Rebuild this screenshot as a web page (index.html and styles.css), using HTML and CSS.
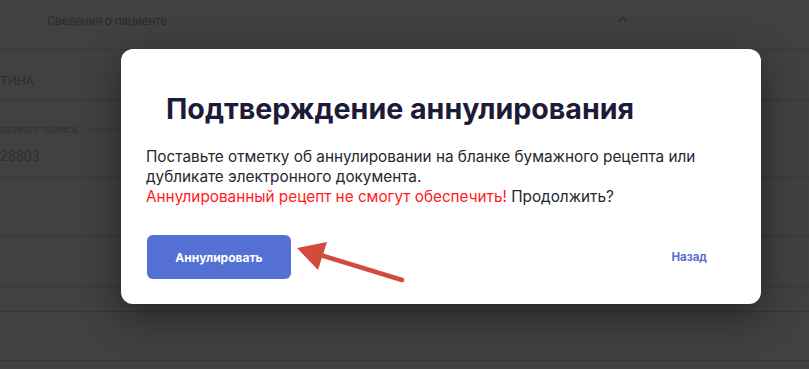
FILE: index.html
```html
<!DOCTYPE html>
<html lang="ru">
<head>
  <meta charset="UTF-8">
  <meta name="viewport" content="width=device-width, initial-scale=1.0">
  <title>Подтверждение аннулирования</title>
  <link rel="stylesheet" href="styles.css">
</head>
<body>
  <div class="page">
    <div class="section-head">
      <span class="section-title">Сведения о пациенте</span>
      <svg class="chevron" width="10" height="6" viewBox="0 0 10 6"><path d="M1 5.5 L5 1.5 L9 5.5" fill="none" stroke="#2a2a2a" stroke-width="1.3"/></svg>
    </div>
    <div class="row row-name"><span class="value">ТИНА</span></div>
    <div class="field">
      <div class="legend"><span>ахового полиса</span><i class="legend-line"></i></div>
      <span class="value">28803</span>
    </div>
    <div class="row row-tall"></div>
    <div class="row row-mid"></div>
    <div class="row row-small"></div>
    <div class="row row-tall2"></div>
  </div>

  <div class="modal">
    <h1 class="modal-title">Подтверждение аннулирования</h1>
    <p class="modal-text">
      Поставьте отметку об аннулировании на бланке бумажного рецепта или
      дубликате электронного документа.<br>
      <span class="warn">Аннулированный рецепт не смогут обеспечить!</span> Продолжить?
    </p>
    <div class="modal-actions">
      <button class="btn-primary">Аннулировать</button>
      <button class="btn-link">Назад</button>
    </div>
  </div>

  <svg class="arrow" width="120" height="50" viewBox="0 0 120 50">
    <line x1="108" y1="38" x2="20" y2="11" stroke="#d24b3c" stroke-width="4.5" stroke-linecap="round"/>
    <polygon points="3,6 33,0 24,28" fill="#d24b3c"/>
  </svg>
</body>
</html>
```

FILE: styles.css
```css
html, body {
  margin: 0;
  height: 100%;
}
body {
  background: #414141;
  font-family: Roboto, "Liberation Sans", sans-serif;
  overflow: hidden;
}
.page {
  color: #2b2b2b;
}
.section-head {
  height: 50px;
  border-bottom: 1px solid #373737;
  display: flex;
  align-items: flex-start;
  padding: 13px 0 0 47px;
  box-sizing: border-box;
  font-size: 12.5px;
  letter-spacing: -0.3px;
}
.chevron {
  margin: 3px 0 0 451px;
}
.row {
  border-bottom: 1px solid #373737;
  box-sizing: border-box;
}
.row-name {
  height: 50px;
  padding-top: 20px;
}
.value {
  font-size: 13px;
  letter-spacing: -0.3px;
  color: #2f2f2f;
}
.field {
  height: 78px;
  border-bottom: 1px solid #373737;
  box-sizing: border-box;
  padding-top: 23px;
}
.legend {
  display: flex;
  align-items: center;
  font-size: 10px;
  letter-spacing: 0.3px;
  color: #303030;
  height: 12px;
  margin-bottom: 11px;
}
.legend-line {
  display: block;
  width: 100px;
  height: 1px;
  background: #383838;
  margin-left: 7px;
}
.field .value {
  font-size: 14.5px;
}
.row-tall { height: 59px; }
.row-mid { height: 50px; }
.row-small { height: 25px; }
.row-tall2 { height: 49px; }

.modal {
  position: absolute;
  left: 121px;
  top: 49px;
  width: 640px;
  height: 255px;
  box-sizing: border-box;
  background: #fff;
  border-radius: 12px;
  box-shadow: 0 12px 40px rgba(0, 0, 0, 0.45);
  padding: 43px 25px 0 25px;
  font-family: Inter, "Noto Sans", sans-serif;
}
.modal-title {
  margin: 0 0 0 20px;
  font-size: 28.6px;
  font-weight: 700;
  line-height: 34px;
  color: #1c1c38;
}
.modal-text {
  margin: 21px 0 0 0;
  font-size: 15.3px;
  line-height: 20px;
  color: #26262e;
}
.warn {
  color: #ff1a1a;
}
.modal-actions {
  display: flex;
  align-items: center;
  justify-content: space-between;
  margin-top: 28px;
}
.btn-primary {
  width: 144px;
  height: 44px;
  border: none;
  border-radius: 6px;
  background: #5470d4;
  color: #fff;
  font-family: inherit;
  font-size: 12px;
  font-weight: 700;
  margin-left: 1px;
}
.btn-link {
  background: none;
  border: none;
  color: #5a6fd2;
  font-family: inherit;
  font-size: 11.5px;
  font-weight: 700;
  margin-right: 29px;
  padding: 0;
}
.arrow {
  position: absolute;
  left: 294px;
  top: 242px;
}
```
